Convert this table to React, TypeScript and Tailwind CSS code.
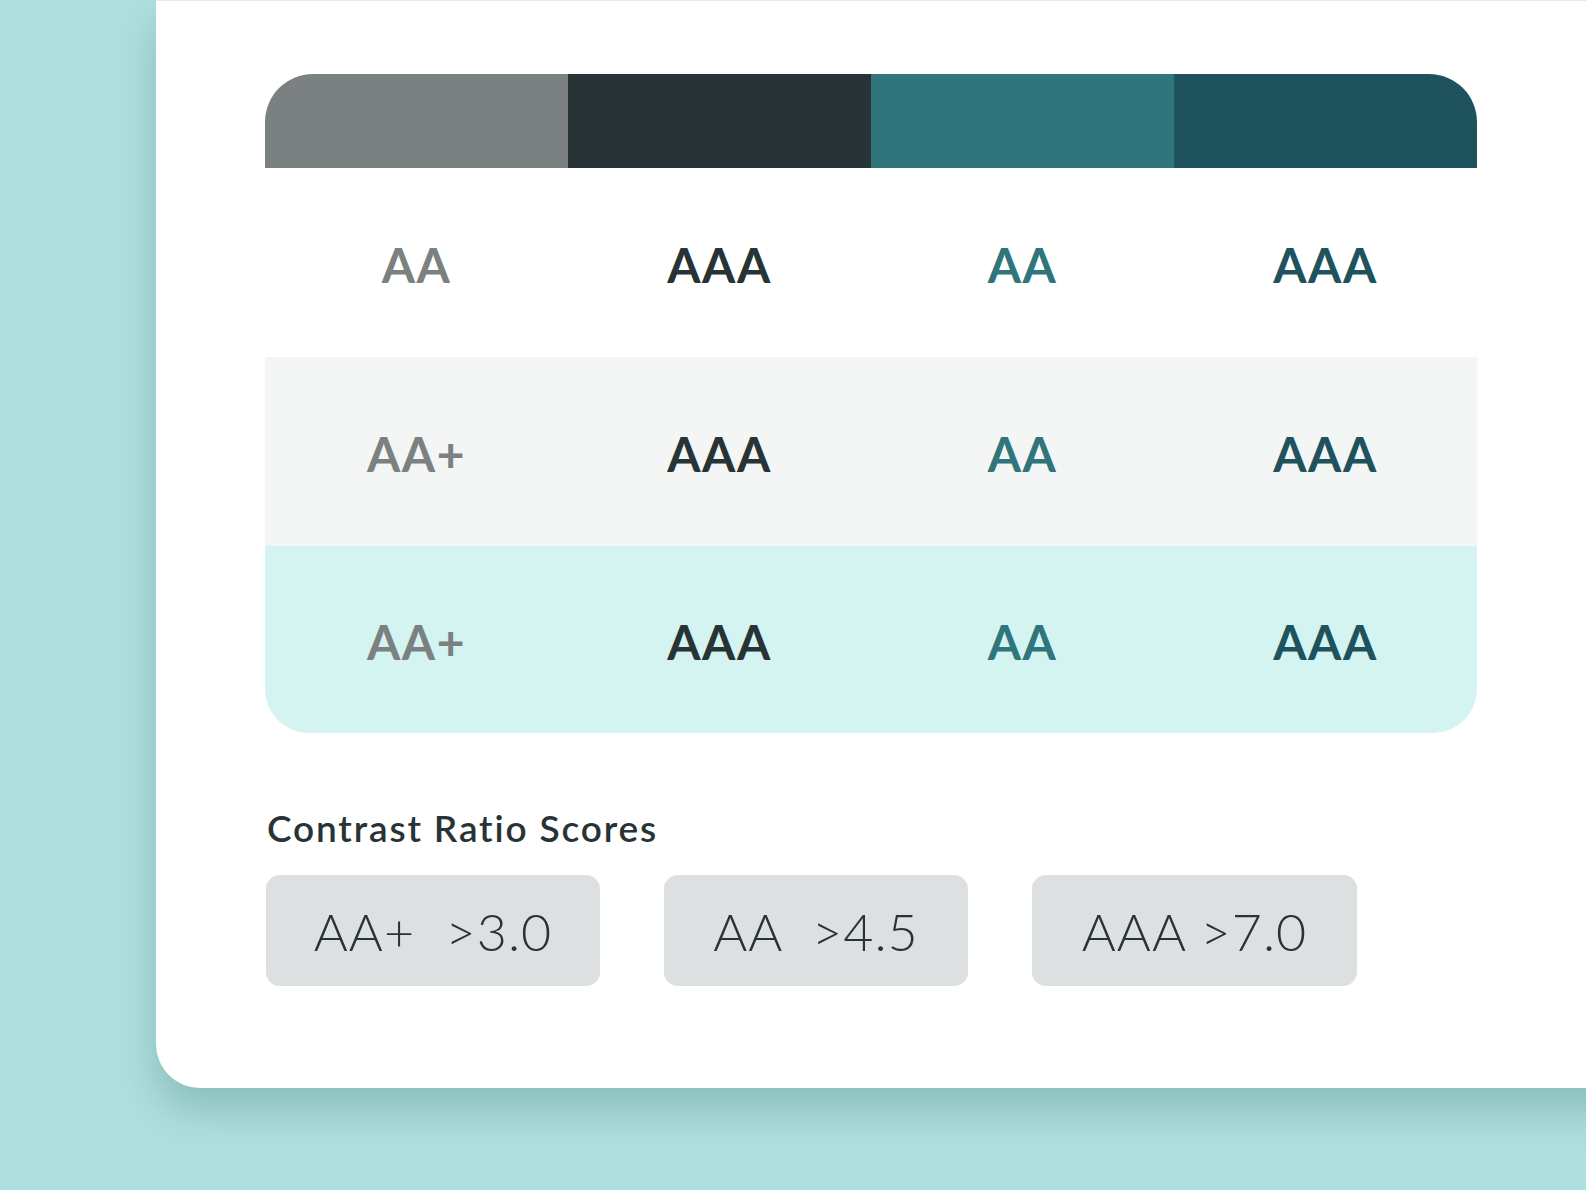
import React from 'react';

const columns = [
  { color: 'bg-[#7b8180]', text: 'text-[#7b8180]', labels: ['AA', 'AA+', 'AA+'] },
  { color: 'bg-[#273334]', text: 'text-[#273334]', labels: ['AAA', 'AAA', 'AAA'] },
  { color: 'bg-[#2f757b]', text: 'text-[#2f757b]', labels: ['AA', 'AA', 'AA'] },
  { color: 'bg-[#1e535e]', text: 'text-[#1e535e]', labels: ['AAA', 'AAA', 'AAA'] },
];

const rows = [
  'h-[189px] bg-white',
  'h-[189px] bg-[#f3f6f5]',
  'h-[187px] bg-[#d4f4f1] rounded-b-[44px]',
];

const scores = [
  { label: 'AA+  >3.0', width: 'w-[334px]' },
  { label: 'AA  >4.5', width: 'w-[304px]' },
  { label: 'AAA >7.0', width: 'w-[325px]' },
];

const App = () => {
  return (
    <div className="min-h-[1190px] w-full overflow-hidden bg-[#b0dfdf] pl-[156px] font-['Lato',sans-serif]">
      <div className="h-[1088px] w-[1500px] rounded-bl-[44px] border-t border-[#e6eaea] bg-white pl-[109px] pt-[73px] shadow-[0_22px_40px_rgba(40,100,100,0.28)]">
        {/* Colour bar */}
        <div className="flex h-[94px] w-[1212px] overflow-hidden rounded-t-[48px]">
          {columns.map((c, i) => (
            <div key={i} className={`flex-1 ${c.color}`} />
          ))}
        </div>

        {/* Score grid */}
        <div className="w-[1212px]">
          {rows.map((row, r) => (
            <div key={r} className={`flex items-center pt-[4px] ${row}`}>
              {columns.map((c, i) => (
                <div
                  key={i}
                  className={`flex-1 text-center text-[48px] font-bold leading-none tracking-[0.03em] ${c.text}`}
                >
                  {c.labels[r]}
                </div>
              ))}
            </div>
          ))}
        </div>

        {/* Legend */}
        <h2 className="mt-[74px] pl-[2px] text-[37px] font-semibold leading-[42px] tracking-[0.05em] text-[#273334]">
          Contrast Ratio Scores
        </h2>
        <div className="mt-[26px] flex gap-[64px] pl-[1px]">
          {scores.map((s) => (
            <div
              key={s.label}
              className={`flex h-[111px] items-center justify-center rounded-[14px] bg-[#dde0e0] ${s.width}`}
            >
              <span className="whitespace-pre text-[52px] font-light leading-none tracking-[0.02em] text-[#273334]">
                {s.label}
              </span>
            </div>
          ))}
        </div>
      </div>
    </div>
  );
};

export default App;
